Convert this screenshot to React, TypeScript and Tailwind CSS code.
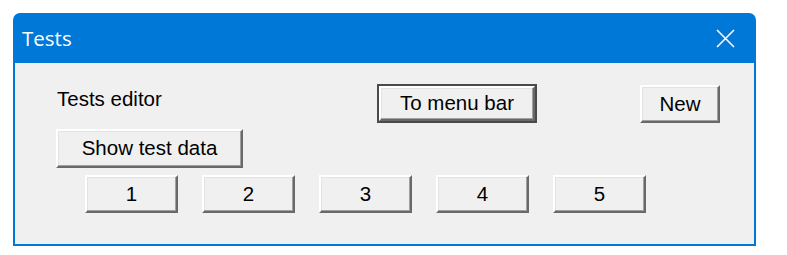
import React from "react";

const font = { fontFamily: '"Liberation Sans", Arial, sans-serif' };

function Btn({ w, h, label, def }: { w: string; h: string; label: string; def?: boolean }) {
  const inner = (
    <button
      className={`flex items-center justify-center bg-[#f0f0f0] border-2 border-t-[#ffffff] border-l-[#ffffff] border-b-[#696969] border-r-[#696969] shadow-[inset_-1px_-1px_0_#a0a0a0,inset_1px_1px_0_#e3e3e3] text-[20.5px] text-black leading-none ${def ? "w-full h-full" : `${w} ${h}`}`}
      style={font}
    >
      {label}
    </button>
  );
  if (def) {
    return <div className={`${w} ${h} border-2 border-[#4a4a4a]`}>{inner}</div>;
  }
  return inner;
}

export default function App() {
  return (
    <div className="w-[787px] h-[255px] bg-white pt-[13px] pl-[13px]">
      <div className="w-[743px] h-[233px] flex flex-col">
        <div className="h-[50px] bg-[#0078d7] rounded-t-[7px] flex items-center justify-between pl-[9px] pr-[21px]">
          <span className="text-white text-[20.5px] leading-none" style={{ fontFamily: '"Open Sans", "Noto Sans", sans-serif' }}>
            Tests
          </span>
          <svg width="19" height="19" viewBox="0 0 19 19">
            <path d="M1 1 L18 18 M18 1 L1 18" stroke="#ffffff" strokeWidth="1.6" />
          </svg>
        </div>
        <div className="flex-1 bg-[#f0f0f0] border-x-2 border-b-2 border-[#0078d7] flex flex-col">
          <div className="flex items-start pt-[21px]">
            <div className="w-[320px] ml-[42px] mt-[3px] text-[20.5px] leading-[23px] text-black" style={font}>
              Tests editor
            </div>
            <Btn w="w-[160px]" h="h-[39px]" label="To menu bar" def />
            <div className="ml-[103px] mt-[1px]">
              <Btn w="w-[80px]" h="h-[38px]" label="New" />
            </div>
          </div>
          <div className="ml-[41px] mt-[6px]">
            <Btn w="w-[187px]" h="h-[39px]" label="Show test data" />
          </div>
          <div className="flex ml-[70px] mt-[7px] gap-[24px]">
            {["1", "2", "3", "4", "5"].map((n) => (
              <Btn key={n} w="w-[93px]" h="h-[38px]" label={n} />
            ))}
          </div>
        </div>
      </div>
    </div>
  );
}
